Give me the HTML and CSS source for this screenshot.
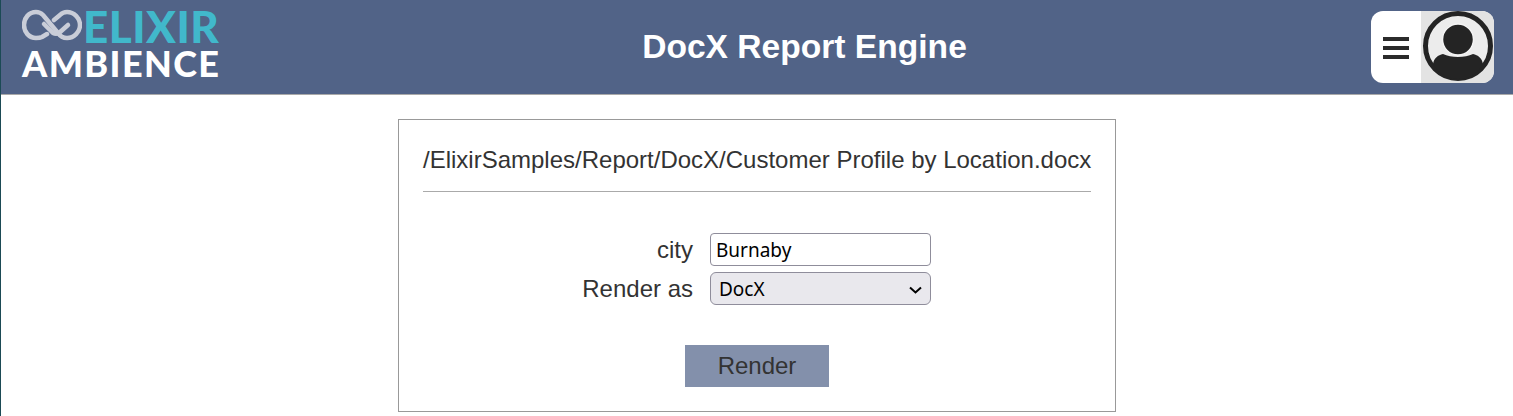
FILE: index.html
```html
<!DOCTYPE html>
<html lang="en">
<head>
<meta charset="utf-8">
<title>DocX Report Engine</title>
<link rel="stylesheet" href="styles.css">
</head>
<body>
<header class="topbar">
  <div class="logo">
    <div class="logo-top">
      <svg class="logo-mark" width="60" height="36" viewBox="6 4 60 36" aria-hidden="true">
        <path class="mark-line" d="M31 30 L26 33 C24 34 22 34 20 34 C13 34 8 28 8 21 C8 14 13 8 20 8 C23 8 25 9 27 11 L42 29 C44 32 47 34 51 34 C58 34 64 28 64 21 C64 14 58 8 51 8 C48 8 46 9 44 11 L38 16"/>
        <path class="mark-line" d="M28 20 L37 29 C39 30 41 30 43 29 L52 21"/>
      </svg>
      <span class="logo-elixir">ELIXIR</span>
    </div>
    <div class="logo-ambience">AMBIENCE</div>
  </div>
  <h1 class="title">DocX Report Engine</h1>
  <div class="user-box">
    <div class="menu-btn"><span class="bar"></span><span class="bar"></span><span class="bar"></span></div>
    <div class="avatar">
      <svg width="73" height="72" viewBox="0 0 73 72" aria-hidden="true">
        <circle class="avatar-ring" cx="37" cy="35" r="32.5"/>
        <path class="avatar-fill" d="M12 53 C13 47 17 44 22 43 C30 47 44 47 52 43 C57 44 61 47 62 53 C56 63 47 68 37 68 C27 68 18 63 12 53 Z"/>
        <circle class="avatar-head" cx="37" cy="28.5" r="15.5"/>
      </svg>
    </div>
  </div>
</header>
<main class="page">
  <section class="card">
    <div class="path">/ElixirSamples/Report/DocX/Customer Profile by Location.docx</div>
    <hr class="rule">
    <form class="form">
      <label class="field-label" for="city">city</label>
      <input class="field-input" id="city" type="text" value="Burnaby">
      <label class="field-label" for="render">Render as</label>
      <div class="select-wrap">
        <select class="field-select" id="render"><option>DocX</option></select>
        <svg class="chevron" width="13" height="8" viewBox="0 0 13 8" aria-hidden="true"><path d="M1 1.5 L6.5 6.5 L12 1.5"/></svg>
      </div>
    </form>
    <div class="actions"><button class="render-btn" type="button">Render</button></div>
  </section>
</main>
</body>
</html>
```
FILE: styles.css
```css
* { box-sizing: border-box; }
html, body { height: 100%; overflow: hidden; }
body {
  margin: 0;
  background: #fff;
  border-left: 1px solid #1b4a55;
  font-family: "Liberation Sans", Arial, sans-serif;
  color: #333;
}
.topbar {
  height: 95px;
  background: #516387;
  border-bottom: 1px solid #a9a9a9;
  display: grid;
  grid-template-columns: 216px 1fr 123px;
  align-items: center;
  padding: 0 19px 0 21px;
}
.logo { display: flex; flex-direction: column; align-self: start; padding-top: 8px; }
.logo-top { display: flex; align-items: flex-start; height: 41px; }
.logo-mark { display: block; flex: none; margin-right: 1px; }
.mark-line { fill: none; stroke: #c9cdd8; stroke-width: 4.5; stroke-linejoin: round; stroke-linecap: round; }
.logo-elixir {
  font-family: Lato, sans-serif;
  font-weight: 900;
  font-size: 44px;
  line-height: 36px;
  letter-spacing: 0.5px;
  color: #41b8cb;
}
.logo-ambience {
  font-family: Lato, sans-serif;
  font-weight: 900;
  font-size: 36px;
  line-height: 28px;
  letter-spacing: 1.4px;
  color: #fff;
}
.title {
  margin: 0;
  justify-self: center;
  font-size: 33.6px;
  font-weight: 700;
  color: #fff;
  white-space: nowrap;
}
.user-box {
  display: flex;
  width: 123px;
  height: 72px;
  border-radius: 12px;
  overflow: hidden;
  background: #fff;
}
.menu-btn {
  width: 50px;
  flex: none;
  display: flex;
  flex-direction: column;
  justify-content: center;
  align-items: center;
  gap: 5px;
  padding-top: 2px;
}
.bar { width: 26px; height: 4px; background: #2b2b2b; }
.avatar { flex: 1; background: #e3e3e3; display: flex; }
.avatar svg { display: block; flex: none; }
.avatar-ring { fill: #ececec; stroke: #242424; stroke-width: 5; }
.avatar-fill { fill: #242424; }
.avatar-head { fill: #242424; stroke: #f4f4f4; stroke-width: 1.5; }
.page { display: flex; justify-content: center; padding-top: 24px; }
.card {
  width: 718px;
  height: 293px;
  border: 1px solid #999;
  padding: 24px 24px 0;
}
.path { font-size: 24px; line-height: 32px; white-space: nowrap; }
.rule { margin: 15px 0 0; border: 0; border-top: 1px solid #aaa; }
.form {
  display: grid;
  grid-template-columns: 270px 221px;
  column-gap: 17px;
  row-gap: 6px;
  align-items: center;
  margin-top: 41px;
}
.field-label { font-size: 24px; text-align: right; line-height: 33px; }
.field-input, .field-select {
  display: block;
  width: 221px;
  height: 33px;
  border: 1px solid #8f8d9b;
  border-radius: 4px;
  font-family: "Noto Sans", sans-serif;
  font-size: 19px;
  color: #000;
}
.field-input { background: #fff; padding: 0 5px; outline: none; }
.select-wrap { position: relative; }
.field-select {
  appearance: none;
  background: #e9e8ed;
  padding: 0 8px;
  border-radius: 6px;
}
.chevron { position: absolute; right: 9px; top: 14px; pointer-events: none; }
.chevron path { fill: none; stroke: #000; stroke-width: 2; }
.actions { display: flex; justify-content: center; margin-top: 40px; }
.render-btn {
  width: 144px;
  height: 42px;
  border: 0;
  background: #8390ab;
  color: #333;
  font-family: "Liberation Sans", Arial, sans-serif;
  font-size: 24px;
}
```
